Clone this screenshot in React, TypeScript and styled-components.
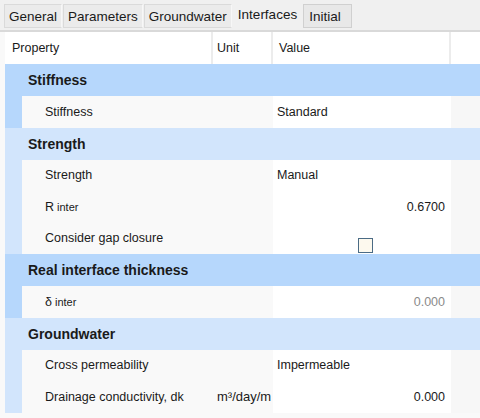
import styled, { createGlobalStyle } from 'styled-components';

const Global = createGlobalStyle`
  body {
    margin: 0;
    background: #f9f9f9;
    font-family: "Liberation Sans", Arial, sans-serif;
    font-size: 12.5px;
    color: #1a1a1a;
  }
`;

const Page = styled.div`
  width: 480px;
  height: 418px;
  overflow: hidden;
  background: #f9f9f9;
`;

const TabStrip = styled.div`
  display: flex;
  align-items: flex-start;
  height: 32px;
  padding: 4px 0 0 4px;
  box-sizing: border-box;
  background: #f0f0f0;
  border-bottom: 2px solid #d9d9d9;
  font-size: 13.5px;
`;

const Tab = styled.div<{ $active?: boolean; $boxed?: boolean }>`
  height: 24px;
  display: flex;
  align-items: center;
  padding: 0 4px;
  box-sizing: border-box;
  background: #ebebeb;
  border: 1px solid #dadada;
  border-right-color: #f7f7f7;
  margin-right: 1px;
  white-space: nowrap;
  ${p => p.$boxed && 'border: 1px solid #d0d0d0; background: #e8e8e8; padding: 0 10px 0 5px;'}
  ${p => p.$active && 'background: #f0f0f0; border-color: transparent; height: 27px; margin-top: -3px; padding: 0 4px 0 4px;'}
`;

const Table = styled.div`
  margin-left: 5px;
  background: #f9f9f9;
`;

const cols = '17px 191px 60px 178px 1fr';

const HeaderRow = styled.div`
  display: grid;
  grid-template-columns: 208px 60px 178px 1fr;
  height: 32px;
  background: #ffffff;
`;

const HeaderCell = styled.div<{ $pad: number }>`
  display: flex;
  align-items: center;
  padding-left: ${p => p.$pad}px;
  border-right: 2px solid #ececec;
`;

const GroupRow = styled.div<{ $tone: string }>`
  display: flex;
  align-items: center;
  height: 32px;
  padding-left: 23px;
  background: ${p => p.$tone};
  font-weight: bold;
  font-size: 14px;
`;

const ItemRow = styled.div`
  display: grid;
  grid-template-columns: ${cols};
  height: 31.5px;
`;

const Strip = styled.div<{ $tone: string }>`
  background: ${p => p.$tone};
`;

const PropCell = styled.div`
  display: flex;
  align-items: center;
  padding-left: 23px;
  background: #f9f9f9;
  white-space: nowrap;
`;

const UnitCell = styled.div`
  display: flex;
  align-items: center;
  padding-left: 4px;
  background: #f9f9f9;
  white-space: nowrap;
  font-size: 13px;
`;

const ValueCell = styled.div<{ $align?: string; $muted?: boolean }>`
  display: flex;
  align-items: center;
  justify-content: ${p => p.$align || 'flex-start'};
  padding: 0 6px 0 4px;
  background: #ffffff;
  color: ${p => (p.$muted ? '#8a8a8a' : '#1a1a1a')};
`;

const Rest = styled.div`
  background: #f7f7f7;
`;

const Sub = styled.sub`
  font-size: 11px;
  vertical-align: -6px;
  margin-left: 3px;
`;

const Check = styled.span`
  width: 15px;
  height: 15px;
  box-sizing: border-box;
  border: 1.5px solid #4b6b85;
  background: #fdf9ee;
  margin-top: 14px;
  margin-left: 8px;
`;

const DARK = '#b6d7fc';
const LIGHT = '#d2e5fc';

type Item = {
  label: React.ReactNode;
  unit?: string;
  value?: React.ReactNode;
  align?: string;
  muted?: boolean;
};

type Group = { title: string; tone: string; items: Item[] };

const groups: Group[] = [
  {
    title: 'Stiffness',
    tone: DARK,
    items: [{ label: 'Stiffness', value: 'Standard' }],
  },
  {
    title: 'Strength',
    tone: LIGHT,
    items: [
      { label: 'Strength', value: 'Manual' },
      { label: <>R<Sub>inter</Sub></>, value: '0.6700', align: 'flex-end' },
      { label: 'Consider gap closure', value: <Check />, align: 'center' },
    ],
  },
  {
    title: 'Real interface thickness',
    tone: DARK,
    items: [{ label: <>δ<Sub>inter</Sub></>, value: '0.000', align: 'flex-end', muted: true }],
  },
  {
    title: 'Groundwater',
    tone: LIGHT,
    items: [
      { label: 'Cross permeability', value: 'Impermeable' },
      { label: 'Drainage conductivity, dk', unit: 'm³/day/m', value: '0.000', align: 'flex-end' },
    ],
  },
];

export default function App() {
  return (
    <Page>
      <Global />
      <TabStrip>
        <Tab>General</Tab>
        <Tab>Parameters</Tab>
        <Tab>Groundwater</Tab>
        <Tab $active>Interfaces</Tab>
        <Tab $boxed>Initial</Tab>
      </TabStrip>
      <Table>
        <HeaderRow>
          <HeaderCell $pad={7}>Property</HeaderCell>
          <HeaderCell $pad={4}>Unit</HeaderCell>
          <HeaderCell $pad={6}>Value</HeaderCell>
          <div />
        </HeaderRow>
        {groups.map(g => (
          <div key={g.title}>
            <GroupRow $tone={g.tone}>{g.title}</GroupRow>
            {g.items.map((it, i) => (
              <ItemRow key={i}>
                <Strip $tone={g.tone} />
                <PropCell>{it.label}</PropCell>
                <UnitCell>{it.unit}</UnitCell>
                <ValueCell $align={it.align} $muted={it.muted}>{it.value}</ValueCell>
                <Rest />
              </ItemRow>
            ))}
          </div>
        ))}
      </Table>
    </Page>
  );
}
